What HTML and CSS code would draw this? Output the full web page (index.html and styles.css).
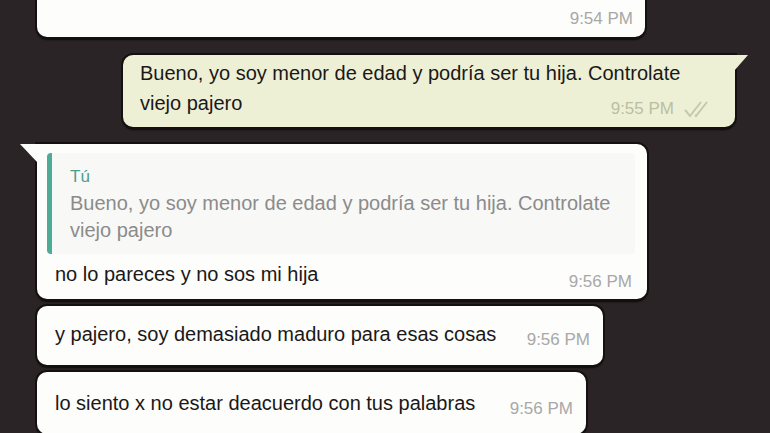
FILE: index.html
```html
<!DOCTYPE html>
<html>
<head>
<meta charset="UTF-8">
<title>Chat</title>
<link rel="stylesheet" href="styles.css">
</head>
<body>
<div class="chat">
	<div class="msg in first">
		<span class="time">9:54 PM</span>
	</div>

	<div class="msg out">
		<div class="text">Bueno, yo soy menor de edad y podría ser tu hija. Controlate</div>
		<div class="row">
			<span class="text">viejo pajero</span>
			<span class="meta">
				<span class="time">9:55 PM</span>
				<svg class="ticks" width="32" height="18" viewBox="0 0 32 18">
					<path d="M2 10 L7 16 L18 2" fill="none" stroke="#c3caa9" stroke-width="2"/>
					<path d="M12 15 L13 16 L24 2" fill="none" stroke="#c3caa9" stroke-width="2"/>
				</svg>
			</span>
		</div>
	</div>

	<div class="msg in reply">
		<div class="quote">
			<div class="quote-name">Tú</div>
			<div class="quote-text">Bueno, yo soy menor de edad y podría ser tu hija. Controlate<br>viejo pajero</div>
		</div>
		<div class="row">
			<span class="text">no lo pareces y no sos mi hija</span>
			<span class="time">9:56 PM</span>
		</div>
	</div>

	<div class="msg in short w4">
		<span class="text">y pajero, soy demasiado maduro para esas cosas</span>
		<span class="time">9:56 PM</span>
	</div>

	<div class="msg in short w5">
		<span class="text">lo siento x no estar deacuerdo con tus palabras</span>
		<span class="time">9:56 PM</span>
	</div>
</div>
</body>
</html>
```

FILE: styles.css
```css
body{margin:0; background:#2b2426; font-family:"Liberation Sans", Arial, sans-serif; overflow:hidden; height:433px;}
.chat{display:flex; flex-direction:column; padding:0 25px 0 37px;}

.msg{position:relative; background:#fdfdfb; border-radius:10px; box-shadow:0 0 0 2px #141011, 0 3px 2px #0c0909; color:#1a1818; font-size:20px; box-sizing:border-box;}
.time{color:#a8a8a8; font-size:17px; white-space:nowrap;}
.row{display:flex; justify-content:space-between; align-items:flex-end;}

.first{width:608px; height:57px; margin-top:-20px; display:flex; justify-content:flex-end; align-items:flex-end; padding:0 12px 8px 0;}

.out{align-self:flex-end; width:612px; margin:18px 10px 0 0; background:#eef0d6; border-top-right-radius:0; padding:3px 20px 9px 17px; line-height:30px;}
.out::after{content:""; position:absolute; top:0; right:-13px; border-top:16px solid #eef0d6; border-right:14px solid transparent;}
.out .meta{display:flex; align-items:center; gap:9px; margin-bottom:-6px;}
.out .meta .time{color:#b9c09e;}
.ticks{display:block;}

.reply{width:610px; margin-top:17px; padding:9px 12px 13px 10px; border-top-left-radius:0;}
.reply::before{content:""; position:absolute; top:0; left:-17px; border-top:18px solid #fdfdfb; border-left:17px solid transparent;}
.quote{background:#f8f8f7; border-left:5px solid #4eab95; border-radius:4px; padding:13px 12px 10px 18px; line-height:27px;}
.quote-name{color:#4c9f8c; font-size:17px; line-height:22px; margin-bottom:2px;}
.quote-text{color:#8b8b8b;}
.reply .row{padding:8px 3px 0 8px; line-height:24px;}
.reply .row .time{margin-bottom:-8px;}

.short{display:flex; justify-content:space-between; align-items:flex-end; margin-top:7px; padding:16px 13px 19px 18px; line-height:24px;}
.short .time{margin-bottom:-6px;}
.w4{width:566px;}
.w5{width:549px; padding-top:19px;}
```
